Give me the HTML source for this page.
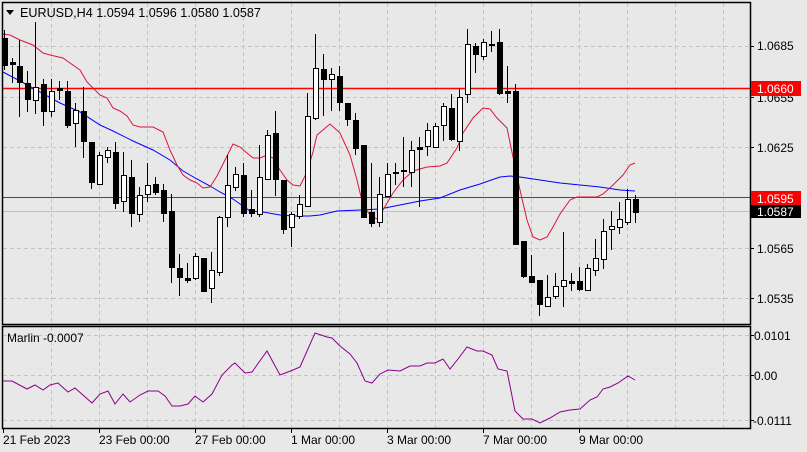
<!DOCTYPE html>
<html><head><meta charset="utf-8"><style>
body{margin:0;background:#e8e8e8;width:807px;height:452px;overflow:hidden}
svg{display:block}
text{font-family:"Liberation Sans",sans-serif;font-size:12px;fill:#000}
</style></head><body>
<svg width="807" height="452" xmlns="http://www.w3.org/2000/svg">
<rect width="807" height="452" fill="#e8e8e8"/>
<g stroke="#c4c4c4" stroke-dasharray="4,3" stroke-width="1">
<path d="M51.5 3V324M99.5 3V324M147.5 3V324M195.5 3V324M243.5 3V324M291.5 3V324M339.5 3V324M387.5 3V324M435.5 3V324M483.5 3V324M531.5 3V324M579.5 3V324M627.5 3V324M675.5 3V324M723.5 3V324"/>
<path d="M3 46.5H750M3 97.5H750M3 147.5H750M3 197.5H750M3 248.5H750M3 298.5H750"/>
<path d="M51.5 327V428M99.5 327V428M147.5 327V428M195.5 327V428M243.5 327V428M291.5 327V428M339.5 327V428M387.5 327V428M435.5 327V428M483.5 327V428M531.5 327V428M579.5 327V428M627.5 327V428M675.5 327V428M723.5 327V428"/>
<path d="M3 335.5H750M3 375.5H750M3 420.5H750"/>
</g>
<line x1="3" y1="211.5" x2="750" y2="211.5" stroke="#c0c0c0"/>
<line x1="3" y1="88.5" x2="750" y2="88.5" stroke="#ff0000" stroke-width="1.5"/>
<line x1="3" y1="197.5" x2="750" y2="197.5" stroke="#ff0000"/>
<polyline fill="none" stroke="#0000ff" stroke-width="1" points="3,72 20,81 40,92 60,103 80,112 100,125 113,131 133,141 153,150 170,160 183,171 197,179 210,186 220,192 233,199 250,211 263,212 280,215 293,216 310,216 320,215 337,211 360,210 380,209 400,205 420,201 440,198 460,190 480,184 500,177 510,176 520,177 540,180 560,183 580,185 600,187 620,190 635,191"/>
<polyline fill="none" stroke="#dc143c" stroke-width="1" points="3,34 10,35 20,40 33,45 43,53 50,55 63,58 70,63 80,70 87,82 93,88 100,95 107,98 113,108 120,111 127,116 133,125 140,127 153,127 163,132 170,150 177,165 183,175 190,180 197,183 203,188 210,187 217,176 227,156 233,144 240,147 247,153 253,158 260,158 267,155 273,158 280,170 287,180 293,185 300,186 307,172 313,152 317,135 330,124 340,133 350,155 357,180 363,205 370,215 377,219 383,210 393,193 403,180 413,171 427,167 440,166 447,163 457,148 463,133 473,118 483,108 490,109 497,118 507,128 513,157 520,190 527,220 533,237 540,240 547,237 553,227 560,214 570,200 577,197 597,197 603,194 613,185 623,175 630,165 635,163"/>
<g id="c" stroke="#000" stroke-width="1"></g>
<polyline fill="none" stroke="#8b008b" stroke-width="1" points="3,381 12,381 27,389 35,385 43,390 50,385 58,383 68,392 75,388 92,403 100,394 108,391 115,404 123,394 130,402 140,395 148,391 158,391 165,396 172,406 180,406 188,404 195,396 203,402 212,394 222,375 232,365 235,363 245,373 252,372 267,351 280,375 293,370 300,367 315,333 327,337 332,338 340,346 350,354 357,363 365,381 372,383 380,374 388,370 400,371 410,366 420,366 427,363 435,363 443,359 450,369 458,359 467,347 477,351 483,351 492,355 498,369 507,371 515,411 523,419 532,419 540,423 550,418 560,412 570,410 580,409 590,400 597,397 603,389 610,387 618,383 628,376 635,380"/>
<g fill="none" stroke="#000" stroke-width="1.5">
<rect x="2.5" y="2.5" width="748" height="322"/>
<rect x="2.5" y="326.5" width="748" height="102"/>
</g>
<g stroke="#000"><path d="M3.5 428V433M99.5 428V433M195.5 428V433M291.5 428V433M387.5 428V433M483.5 428V433M579.5 428V433"/>
<path d="M750 46.5H754M750 97.5H754M750 147.5H754M750 197.5H754M750 248.5H754M750 298.5H754M750 335.5H754M750 375.5H754M750 420.5H754"/></g>
<path d="M6 10L14 10L10 15Z" fill="#000"/>
<text x="20" y="17" style="font-size:12.6px">EURUSD,H4  1.0594 1.0596 1.0580 1.0587</text>
<text x="7" y="342">Marlin -0.0007</text>
<text x="757" y="50">1.0685</text>
<text x="757" y="102">1.0655</text>
<rect x="751" y="81" width="50" height="15" fill="#ff0000"/>
<text x="757" y="93" style="fill:#fff">1.0660</text>
<text x="757" y="152">1.0625</text>
<rect x="751" y="191" width="50" height="14" fill="#ff0000"/>
<text x="757" y="203" style="fill:#fff">1.0595</text>
<rect x="751" y="205" width="50" height="13" fill="#000"/>
<text x="757" y="216" style="fill:#fff">1.0587</text>
<text x="757" y="253">1.0565</text>
<text x="757" y="303">1.0535</text>
<text x="754" y="340">0.0101</text>
<text x="754" y="380">0.00</text>
<text x="753" y="425">-0.0111</text>
<text x="3" y="444">21 Feb 2023</text>
<text x="99" y="444">23 Feb 00:00</text>
<text x="195" y="444">27 Feb 00:00</text>
<text x="291" y="444">1 Mar 00:00</text>
<text x="387" y="444">3 Mar 00:00</text>
<text x="483" y="444">7 Mar 00:00</text>
<text x="579" y="444">9 Mar 00:00</text>
</svg>
<script>
var d=[[4,38,65,30,70,0],[12,62,64,58,83,0],[19,66,82,40,117,0],[27,83,99,71,112,0],[35,87,100,22,114,1],[43,84,111,79,126,0],[51,91,111,79,117,1],[59,88,90,81,100,0],[67,91,125,81,128,0],[75,110,123,103,147,1],[83,111,141,87,158,0],[91,142,182,142,189,0],[99,155,184,152,184,1],[107,150,157,147,163,1],[115,152,203,142,209,0],[123,175,201,152,212,1],[131,177,213,160,227,0],[139,195,214,187,222,1],[147,185,194,163,202,1],[155,184,192,177,195,0],[163,190,213,184,222,0],[171,211,267,194,283,0],[179,268,277,254,296,0],[187,278,280,263,283,0],[195,256,278,253,280,1],[203,258,291,258,291,0],[211,270,288,252,303,1],[219,217,272,216,276,1],[227,185,217,155,227,1],[235,174,187,167,191,1],[243,175,213,163,217,0],[251,209,213,190,217,0],[259,177,214,145,217,1],[267,135,179,130,179,1],[275,133,179,111,196,0],[283,180,229,180,234,0],[291,214,227,212,247,1],[299,204,216,195,219,1],[307,116,206,93,207,1],[315,68,118,34,120,1],[323,69,79,54,116,0],[331,74,79,68,111,1],[339,76,102,66,111,0],[347,103,119,103,126,0],[355,120,148,113,155,0],[363,145,217,145,217,0],[371,212,223,163,227,0],[379,194,222,177,227,1],[387,174,196,163,197,1],[395,172,173,163,185,0],[403,170,171,137,187,0],[411,150,172,141,187,1],[419,147,149,137,207,0],[427,130,146,123,156,1],[435,126,147,123,148,1],[443,106,125,103,141,1],[451,108,139,94,141,0],[459,97,141,89,151,1],[467,44,94,29,103,1],[475,46,54,43,73,0],[483,42,56,39,60,1],[491,44,45,31,52,0],[499,42,93,29,95,0],[507,91,93,66,103,0],[515,91,244,84,244,0],[523,241,276,241,278,0],[531,276,282,255,282,0],[539,280,304,280,316,0],[547,297,306,275,306,1],[555,286,296,273,299,1],[563,280,286,232,307,1],[571,281,283,273,291,0],[579,281,289,267,291,0],[587,268,290,264,291,1],[595,258,270,239,276,1],[603,231,259,219,269,1],[611,226,229,211,250,1],[619,219,227,202,234,1],[627,199,222,189,225,1],[635,199,212,195,223,0]];
var g=document.getElementById('c'),s='';
d.forEach(function(c){var x=c[0];s+='<line x1="'+(x+.5)+'" y1="'+c[3]+'" x2="'+(x+.5)+'" y2="'+c[4]+'"/>';
var h=Math.max(1,c[2]-c[1]);s+='<rect x="'+(x-2+.5)+'" y="'+(c[1]+.5)+'" width="5" height="'+h+'" fill="'+(c[5]?'#fff':'#000')+'"/>';});
g.innerHTML=s;
</script>
</body></html>
